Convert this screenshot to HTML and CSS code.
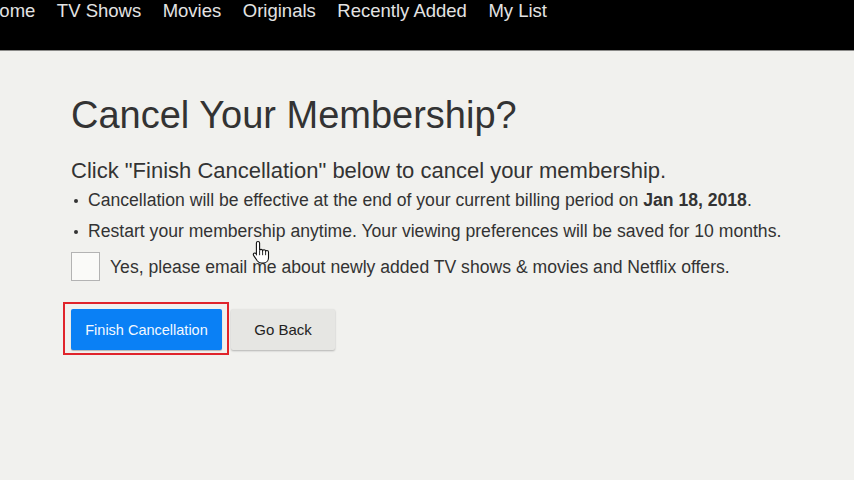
FILE: index.html
```html
<!DOCTYPE html>
<html lang="en">
<head>
<meta charset="utf-8">
<title>Cancel Your Membership?</title>
<link rel="stylesheet" href="styles.css">
</head>
<body>
<header class="topbar">
  <nav class="nav">
    <a class="nav-item">Home</a>
    <a class="nav-item">TV Shows</a>
    <a class="nav-item">Movies</a>
    <a class="nav-item">Originals</a>
    <a class="nav-item">Recently Added</a>
    <a class="nav-item">My List</a>
  </nav>
</header>
<main class="content">
  <h1 class="title">Cancel Your Membership?</h1>
  <p class="lead">Click "Finish Cancellation" below to cancel your membership.</p>
  <ul class="points">
    <li>Cancellation will be effective at the end of your current billing period on <b>Jan 18, 2018</b>.</li>
    <li>Restart your membership anytime. Your viewing preferences will be saved for 10 months.</li>
  </ul>
  <label class="optin">
    <span class="box"></span>
    <span class="optin-text">Yes, please email me about newly added TV shows &amp; movies and Netflix offers.</span>
  </label>
  <div class="actions">
    <div class="highlight">
      <button class="btn btn-primary">Finish Cancellation</button>
    </div>
    <button class="btn btn-secondary">Go Back</button>
  </div>
  <svg class="cursor" width="20" height="24" viewBox="0 0 20 24">
    <path d="M6 1.5c1 0 1.6.7 1.6 1.6v7.2c.3-.6.9-.9 1.5-.9.8 0 1.4.5 1.5 1.2.3-.5.9-.8 1.5-.8.8 0 1.4.5 1.5 1.3.3-.4.8-.6 1.3-.6.9 0 1.6.7 1.6 1.6v5.6c0 3-2.2 5.3-5.2 5.3H9.1c-1.7 0-2.9-.8-3.9-2.2L1.6 15.4c-.5-.8-.3-1.7.4-2.1.7-.4 1.5-.2 2 .4l.4.6V3.1C4.4 2.2 5 1.5 6 1.5z" fill="#fff" stroke="#111" stroke-width="1.1"/>
    <path d="M10.6 11v4.2M13.6 11.5v3.7M7.6 10.3v4.9" stroke="#111" stroke-width="0.9" fill="none"/>
  </svg>
</main>
</body>
</html>
```

FILE: styles.css
```css
* { box-sizing: border-box; }
html, body {
  margin: 0;
  padding: 0;
  background: #f1f1ee;
  font-family: "Liberation Sans", Arial, sans-serif;
  color: #333;
}
.topbar {
  height: 51px;
  background: #000;
  border-bottom: 1px solid #8a8a88;
  overflow: hidden;
}
.nav {
  display: flex;
  gap: 21.5px;
  margin-left: -14px;
}
.nav-item {
  color: #e3e3e3;
  font-size: 18.5px;
  line-height: 22px;
  text-decoration: none;
  white-space: nowrap;
}
.content {
  position: relative;
  padding: 42px 0 0 71px;
}
.title {
  font-size: 38px;
  font-weight: normal;
  line-height: 44px;
  margin: 0;
  color: #333;
}
.lead {
  font-size: 22px;
  line-height: 26px;
  margin: 21px 0 0;
}
.points {
  list-style: none;
  margin: 6px 0 0;
  padding: 0;
}
.points li {
  position: relative;
  font-size: 17.6px;
  line-height: 20px;
  padding-left: 17px;
  margin-bottom: 11px;
}
.points li::before {
  content: "";
  position: absolute;
  left: 3px;
  top: 9px;
  width: 4px;
  height: 4px;
  border-radius: 50%;
  background: #333;
}
.points b { font-weight: bold; }
.optin {
  display: flex;
  align-items: center;
  gap: 10px;
  margin-top: 7px;
}
.box {
  width: 29px;
  height: 29px;
  border: 1px solid #b3b3b3;
  background: #fafaf8;
  flex: none;
}
.optin-text {
  font-size: 17.6px;
  line-height: 20px;
}
.actions {
  display: flex;
  align-items: flex-start;
  gap: 2px;
  margin-top: 21px;
  margin-left: -8px;
}
.highlight {
  border: 2px solid #e0242b;
  padding: 5px 5px 3px 6px;
}
.btn {
  font-family: "Liberation Sans", Arial, sans-serif;
  height: 41px;
  border: none;
  border-radius: 2px;
  cursor: pointer;
}
.btn-primary {
  display: block;
  width: 151px;
  font-size: 14.5px;
  background: #0a80f5;
  color: #f3f8ff;
  box-shadow: 0 1px 1px rgba(0,0,0,0.25);
}
.btn-secondary {
  margin-top: 7px;
  width: 104px;
  font-size: 15px;
  background: #e6e6e3;
  color: #222;
  box-shadow: 0 1px 2px rgba(0,0,0,0.25);
}
.cursor {
  position: absolute;
  left: 252px;
  top: 189px;
}
```
